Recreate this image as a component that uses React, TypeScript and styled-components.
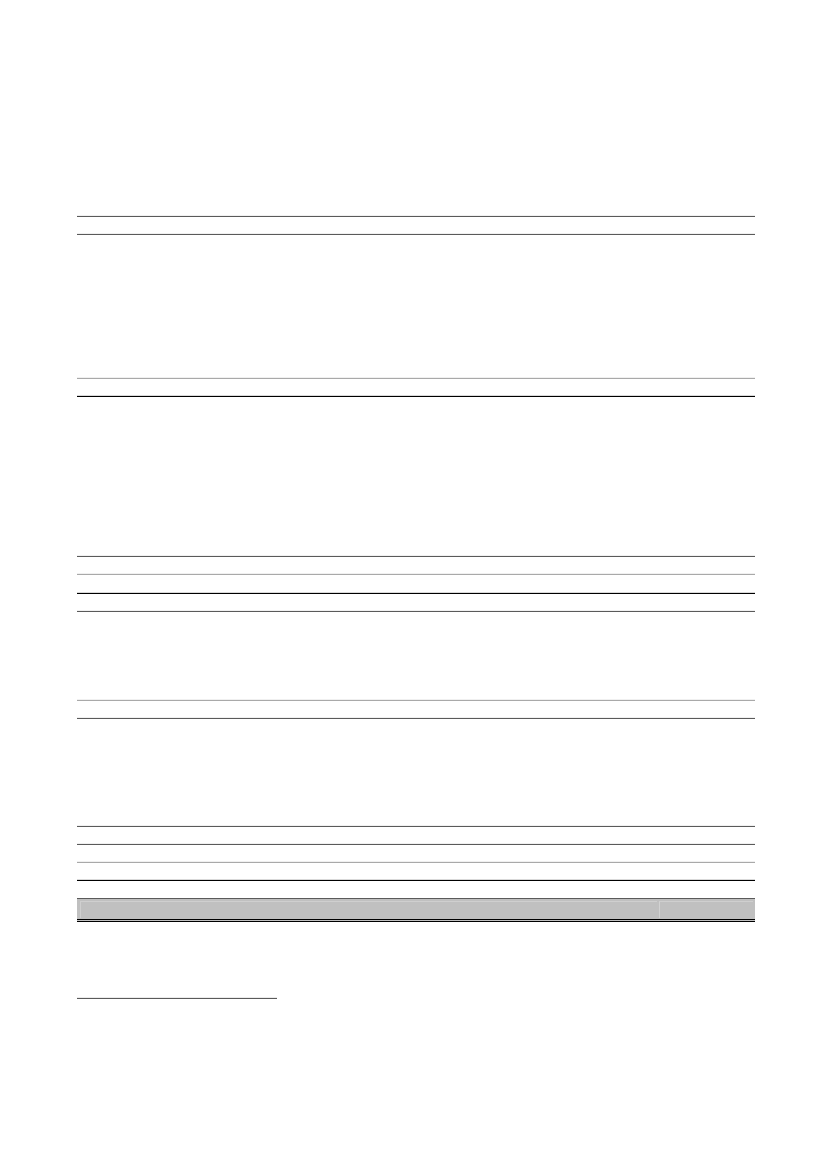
import styled, { createGlobalStyle } from "styled-components";

const GlobalStyle = createGlobalStyle`
    html, body {
        margin: 0;
        padding: 0;
        background: #ffffff;
        font-family: "Liberation Serif", "Times New Roman", serif;
    }
`;

const Page = styled.main`
    width: 826px;
    height: 1169px;
    box-sizing: border-box;
    padding: 216px 71px 0 77px;
    background: #ffffff;
`;

const Table = styled.section`
    width: 678px;
    display: flex;
    flex-direction: column;
`;

type Tone = "dark" | "light" | "black";

const toneColor: Record<Tone, string> = {
    dark: "#5a5a5a",
    light: "#a9a9a9",
    black: "#000000",
};

const Row = styled.div<{ $h: number }>`
    display: grid;
    grid-template-columns: 582px 96px;
    height: ${(p) => p.$h}px;
`;

const Cell = styled.div<{ $tone: Tone }>`
    box-sizing: border-box;
    border-top: 1px solid ${(p) => toneColor[p.$tone]};
    box-shadow: 0 -1px 0 ${(p) => (p.$tone === "black" ? "rgba(0,0,0,0.15)" : "rgba(0,0,0,0.06)")};
`;

const TotalRow = styled.div`
    display: grid;
    grid-template-columns: 582px 96px;
    height: 24px;
    box-sizing: border-box;
    border-top: 1px solid #5a5a5a;
    border-bottom: 3px double #000000;
    background: #c0c0c0;
`;

const TotalCell = styled.div`
    box-sizing: border-box;
    margin: 2px 2px 1px 3px;
    border-top: 1px solid #cfcfcf;
    border-left: 1px solid #cfcfcf;
    & + & {
        margin-left: 0;
        border-left: 1px solid #d2d2d2;
    }
`;

const FootnoteRule = styled.hr`
    width: 200px;
    margin: 76px 0 0;
    border: 0;
    border-top: 1px solid #5a5a5a;
    box-shadow: 0 -1px 0 rgba(0, 0, 0, 0.08);
`;

const rows: { tone: Tone; h: number }[] = [
    { tone: "dark", h: 18 },
    { tone: "dark", h: 144 },
    { tone: "light", h: 18 },
    { tone: "black", h: 160 },
    { tone: "dark", h: 18 },
    { tone: "light", h: 19 },
    { tone: "black", h: 18 },
    { tone: "dark", h: 89 },
    { tone: "light", h: 18 },
    { tone: "dark", h: 108 },
    { tone: "dark", h: 18 },
    { tone: "dark", h: 18 },
    { tone: "light", h: 18 },
    { tone: "black", h: 18 },
];

export default function App() {
    return (
        <>
            <GlobalStyle />
            <Page>
                <Table>
                    {rows.map((r, i) => (
                        <Row key={i} $h={r.h}>
                            <Cell $tone={r.tone} />
                            <Cell $tone={r.tone} />
                        </Row>
                    ))}
                    <TotalRow>
                        <TotalCell />
                        <TotalCell />
                    </TotalRow>
                </Table>
                <FootnoteRule />
            </Page>
        </>
    );
}
